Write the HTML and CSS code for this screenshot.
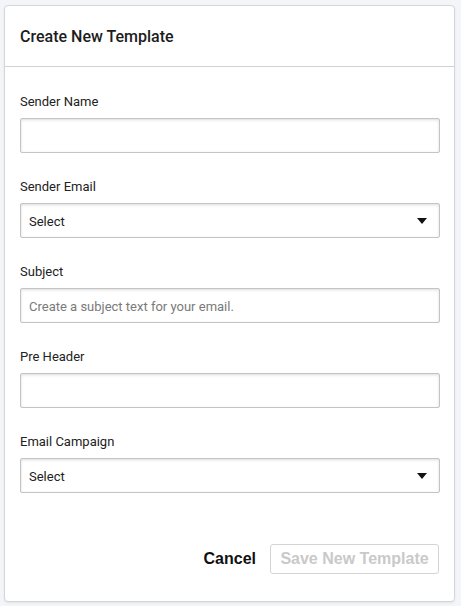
FILE: index.html
```html
<!DOCTYPE html>
<html lang="en">
<head>
    <meta charset="UTF-8">
    <meta name="viewport" content="width=device-width, initial-scale=1.0">
    <title>Create New Template</title>
    <link rel="stylesheet" href="styles.css">
</head>
<body>
    <div class="card">
        <div class="card-header">
            <h1>Create New Template</h1>
        </div>
        <form class="card-body">
            <div class="field">
                <label for="senderName">Sender Name</label>
                <input id="senderName" class="input" type="text">
            </div>
            <div class="field">
                <label>Sender Email</label>
                <div class="input select">
                    <span>Select</span>
                    <span class="caret"></span>
                </div>
            </div>
            <div class="field">
                <label for="subject">Subject</label>
                <input id="subject" class="input" type="text" placeholder="Create a subject text for your email.">
            </div>
            <div class="field">
                <label for="preHeader">Pre Header</label>
                <input id="preHeader" class="input" type="text">
            </div>
            <div class="field">
                <label>Email Campaign</label>
                <div class="input select">
                    <span>Select</span>
                    <span class="caret"></span>
                </div>
            </div>
        </form>
        <div class="card-footer">
            <button class="btn-link" type="button">Cancel</button>
            <button class="btn-save" type="button" disabled>Save New Template</button>
        </div>
    </div>
</body>
</html>
```

FILE: styles.css
```css
*{
    margin: 0;
    padding: 0;
    box-sizing: border-box;
}
body{
    background: #f3f5f8;
    padding: 5px 6px 4px 4px;
    font-family: Roboto, "Liberation Sans", sans-serif;
    color: #222;
}
.card{
    width: 451px;
    height: 597px;
    background: #fff;
    border: 1px solid #d3d7dc;
    border-radius: 4px;
    box-shadow: 0 1px 2px rgba(0, 0, 0, 0.08);
    display: flex;
    flex-direction: column;
}
.card-header{
    height: 61px;
    padding: 0 15px;
    display: flex;
    align-items: center;
    border-bottom: 1px solid #cfd3d7;
}
.card-header h1{
    font-size: 16px;
    font-weight: 500;
    color: #1c1c1c;
    padding-top: 1px;
}
.card-body{
    padding: 27px 15px 0;
    display: flex;
    flex-direction: column;
    gap: 26px;
}
.field{
    display: flex;
    flex-direction: column;
    gap: 8px;
}
.field label{
    font-size: 13px;
    line-height: 16px;
    color: #222;
}
.input{
    width: 420px;
    height: 35px;
    border: 1px solid #c4c4c4;
    border-radius: 2px;
    box-shadow: inset 0 1px 3px rgba(0, 0, 0, 0.14);
    background: #fff;
    padding: 1px 8px 0;
    font-family: Roboto, "Liberation Sans", sans-serif;
    font-size: 13px;
    color: #222;
    outline: none;
}
.input::placeholder{
    color: #7a7a7a;
}
.select{
    display: flex;
    align-items: center;
    justify-content: space-between;
    padding-right: 12px;
}
.caret{
    width: 0;
    height: 0;
    border-left: 5px solid transparent;
    border-right: 5px solid transparent;
    border-top: 6px solid #111;
}
.card-footer{
    margin-top: auto;
    padding: 0 15px 27px;
    display: flex;
    justify-content: flex-end;
    align-items: center;
    gap: 14px;
}
.btn-link{
    background: none;
    border: none;
    font-family: "Liberation Sans", Arial, sans-serif;
    font-weight: bold;
    font-size: 16px;
    color: #111;
}
.btn-save{
    width: 169px;
    height: 30px;
    background: #fff;
    border: 1px solid #d4d4d4;
    border-radius: 3px;
    font-family: "Liberation Sans", Arial, sans-serif;
    font-weight: bold;
    font-size: 16px;
    color: #c9c9c9;
}
```
